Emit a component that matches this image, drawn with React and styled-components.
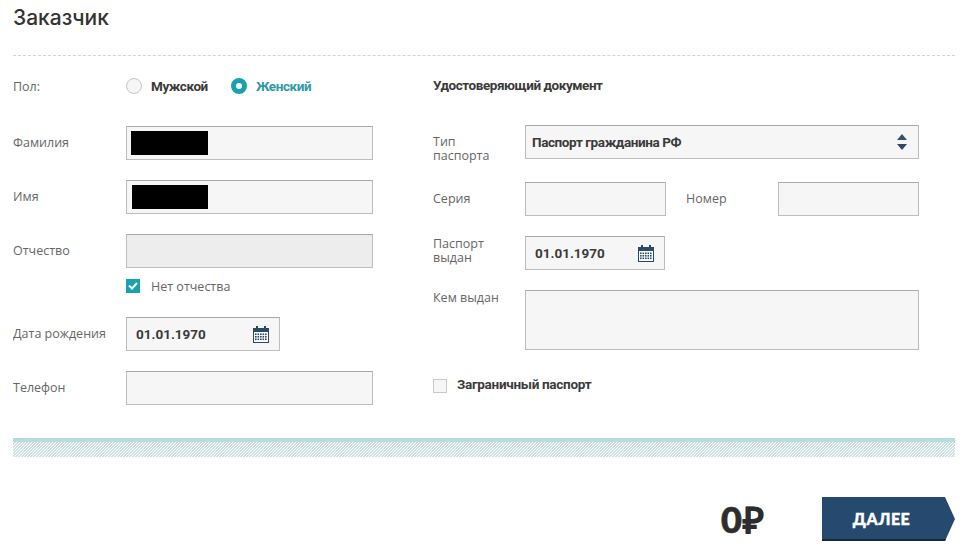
import React from "react";
import styled, { createGlobalStyle } from "styled-components";

const Global = createGlobalStyle`
  html, body { margin: 0; background: #fff; }
  body { font-family: "Open Sans", "Noto Sans", sans-serif; color: #444; }
`;

const Page = styled.div`
  width: 942px;
  height: 550px;
  margin-left: 13px;
  overflow: hidden;
`;
const Header = styled.header`
  height: 55px;
  box-sizing: content-box;
  border-bottom: 1px dashed #d4d4d4;
`;
const Title = styled.h1`
  margin: 0;
  padding-top: 5px;
  font: 500 21px/26px "Inter", "Open Sans", sans-serif;
  color: #333;
`;
const Columns = styled.div`
  display: grid;
  grid-template-columns: 420px 1fr;
`;
const Column = styled.section`
  display: flex;
  flex-direction: column;
`;
const Row = styled.div`
  display: flex;
  align-items: ${(p) => p.$align || "center"};
  margin-top: ${(p) => p.$mt || 0}px;
  height: ${(p) => p.$h || 34}px;
`;
const Label = styled.label`
  flex: none;
  width: ${(p) => p.$w || 113}px;
  margin-left: ${(p) => p.$ml || 0}px;
  font-size: 12.5px;
  line-height: 14px;
  color: #666;
  padding-top: ${(p) => p.$pt || 0}px;
  padding-bottom: ${(p) => p.$pb || 0}px;
`;
const Field = styled.div`
  flex: none;
  box-sizing: border-box;
  display: flex;
  align-items: center;
  justify-content: space-between;
  width: ${(p) => p.$w}px;
  height: ${(p) => p.$h || 34}px;
  padding: ${(p) => p.$pad || "0 10px 0 9px"};
  background: ${(p) => (p.$disabled ? "#ededed" : "#f6f6f6")};
  border: 1px solid #bdbdbd;
  border-top-color: #a9a9a9;
  font-family: "Roboto", sans-serif;
  font-size: 13.5px;
  letter-spacing: ${(p) => p.$ls || 0}px;
  font-weight: 700;
  color: #3a3a3a;
`;
const Redaction = styled.div`
  width: ${(p) => p.$w || 76}px;
  height: 24px;
  background: #000;
`;
const RadioGroup = styled.div`
  display: flex;
  align-items: center;
`;
const Radio = styled.span`
  box-sizing: border-box;
  width: 16px;
  height: 16px;
  margin-right: 9px;
  border-radius: 50%;
  background: ${(p) => (p.$on ? "#fff" : "#f6f6f6")};
  border: ${(p) => (p.$on ? "5px solid #17a2ad" : "1px solid #c4c4c4")};
`;
const Choice = styled.span`
  font-family: "Roboto", sans-serif;
  font-size: 13.5px;
  letter-spacing: -0.4px;
  font-weight: 700;
  color: ${(p) => (p.$on ? "#2e9aa5" : "#3a3a3a")};
  margin-right: ${(p) => p.$mr || 0}px;
`;
const Heading = styled.h2`
  margin: 0;
  font-family: "Roboto", sans-serif;
  font-size: 13.5px;
  letter-spacing: -0.45px;
  font-weight: 700;
  color: #3a3a3a;
`;
const CheckBox = styled.span`
  flex: none;
  box-sizing: border-box;
  display: flex;
  align-items: center;
  justify-content: center;
  width: 14px;
  height: 14px;
  background: ${(p) => (p.$on ? "#17a2ad" : "#f6f6f6")};
  border: ${(p) => (p.$on ? "0" : "1px solid #c8c8c8")};
`;
const CheckText = styled.span`
  margin-left: ${(p) => p.$ml || 11}px;
  padding: ${(p) => (p.$bold ? "0 0 2px" : "2px 0 0")};
  font-family: ${(p) => (p.$bold ? '"Roboto", sans-serif' : "inherit")};
  font-size: ${(p) => (p.$bold ? 13.5 : 12.5)}px;
  letter-spacing: ${(p) => (p.$bold ? -0.3 : 0)}px;
  line-height: 15px;
  font-weight: ${(p) => (p.$bold ? 700 : 400)};
  color: ${(p) => (p.$bold ? "#3a3a3a" : "#666")};
`;
const Offset = styled.div`
  display: flex;
  align-items: center;
  margin-left: ${(p) => p.$ml || 0}px;
`;
const Band = styled.div`
  margin-top: 33px;
  height: 15px;
  border-top: 4px solid #b6dcdd;
  background: linear-gradient(
    -45deg,
    #cddfe0 25%,
    #fff 25%,
    #fff 50%,
    #cddfe0 50%,
    #cddfe0 75%,
    #fff 75%
  );
  background-size: 3px 3px;
`;
const Footer = styled.footer`
  display: flex;
  justify-content: flex-end;
  align-items: center;
  margin-top: 40px;
`;
const Price = styled.div`
  margin-right: 57px;
  font: 900 36px/44px "Lato", sans-serif;
  letter-spacing: 1px;
  -webkit-text-stroke: 0.7px #2d2d2d;
  color: #2d2d2d;
`;
const Next = styled.button`
  width: 133px;
  height: 44px;
  padding: 0 14px 0 0;
  border: 0;
  border-bottom: 2px solid #16293d;
  background: #264a6e;
  clip-path: polygon(0 0, 123px 0, 133px 50%, 123px 100%, 0 100%);
  font: 900 16px "Lato", sans-serif;
  letter-spacing: 0.5px;
  -webkit-text-stroke: 0.4px #fff;
  color: #fff;
`;

const Calendar = () => (
  <svg width="16" height="17" viewBox="0 0 16 17" aria-hidden="true">
    <rect x="0.5" y="2.5" width="15" height="14" fill="#fff" stroke="#2a4a68" />
    <rect x="0" y="2" width="16" height="4" fill="#2a4a68" />
    <rect x="3" y="0" width="2" height="4" fill="#2a4a68" />
    <rect x="11" y="0" width="2" height="4" fill="#2a4a68" />
    {[7.5, 10, 12.5].map((y) =>
      [2, 4.5, 7, 9.5, 12].map((x) => (
        <rect key={`${x}-${y}`} x={x} y={y} width="1.6" height="1.6" fill="#2a4a68" />
      ))
    )}
  </svg>
);

const UpDown = () => (
  <svg width="10" height="16" viewBox="0 0 10 16" aria-hidden="true">
    <path d="M5 0 L10 6 H0 Z" fill="#3d5166" />
    <path d="M0 10 H10 L5 16 Z" fill="#2a4a68" />
  </svg>
);

const Tick = () => (
  <svg width="10" height="8" viewBox="0 0 10 8" aria-hidden="true">
    <path d="M1 3.5 L4 6.5 L9 1" fill="none" stroke="#fff" strokeWidth="2" />
  </svg>
);

export default function App() {
  return (
    <>
      <Global />
      <Page>
        <Header>
          <Title>Заказчик</Title>
        </Header>
        <Columns>
          <Column>
            <Row $mt={13}>
              <Label $pt={1}>Пол:</Label>
              <RadioGroup>
                <Radio />
                <Choice $mr={23}>Мужской</Choice>
                <Radio $on />
                <Choice $on>Женский</Choice>
              </RadioGroup>
            </Row>
            <Row $mt={23}>
              <Label>Фамилия</Label>
              <Field $w={247} $pad="0 4px">
                <Redaction $w={77} />
              </Field>
            </Row>
            <Row $mt={20}>
              <Label>Имя</Label>
              <Field $w={247} $pad="0 5px">
                <Redaction />
              </Field>
            </Row>
            <Row $mt={20}>
              <Label>Отчество</Label>
              <Field $w={247} $disabled />
            </Row>
            <Row $mt={10} $h={15}>
              <Offset $ml={113}>
                <CheckBox $on>
                  <Tick />
                </CheckBox>
                <CheckText>Нет отчества</CheckText>
              </Offset>
            </Row>
            <Row $mt={24}>
              <Label>Дата рождения</Label>
              <Field $w={154}>
                01.01.1970
                <Calendar />
              </Field>
            </Row>
            <Row $mt={20}>
              <Label>Телефон</Label>
              <Field $w={247} />
            </Row>
          </Column>
          <Column>
            <Row $mt={12}>
              <Heading>Удостоверяющий документ</Heading>
            </Row>
            <Row $mt={23}>
              <Label $w={92} $pt={14}>
                Тип
                <br />
                паспорта
              </Label>
              <Field $w={394} $pad="0 11px 0 6px" $ls={-0.4}>
                Паспорт гражданина РФ
                <UpDown />
              </Field>
            </Row>
            <Row $mt={23}>
              <Label $w={92}>Серия</Label>
              <Field $w={141} />
              <Label $w={92} $ml={20}>
                Номер
              </Label>
              <Field $w={141} />
            </Row>
            <Row $mt={20}>
              <Label $w={92} $pb={4}>
                Паспорт
                <br />
                выдан
              </Label>
              <Field $w={140}>
                01.01.1970
                <Calendar />
              </Field>
            </Row>
            <Row $mt={20} $align="flex-start" $h={60}>
              <Label $w={92} $pt={1}>
                Кем выдан
              </Label>
              <Field $w={394} $h={60} />
            </Row>
            <Row $mt={28} $h={15}>
              <CheckBox />
              <CheckText $bold $ml={10}>
                Заграничный паспорт
              </CheckText>
            </Row>
          </Column>
        </Columns>
        <Band />
        <Footer>
          <Price>0₽</Price>
          <Next>ДАЛЕЕ</Next>
        </Footer>
      </Page>
    </>
  );
}
